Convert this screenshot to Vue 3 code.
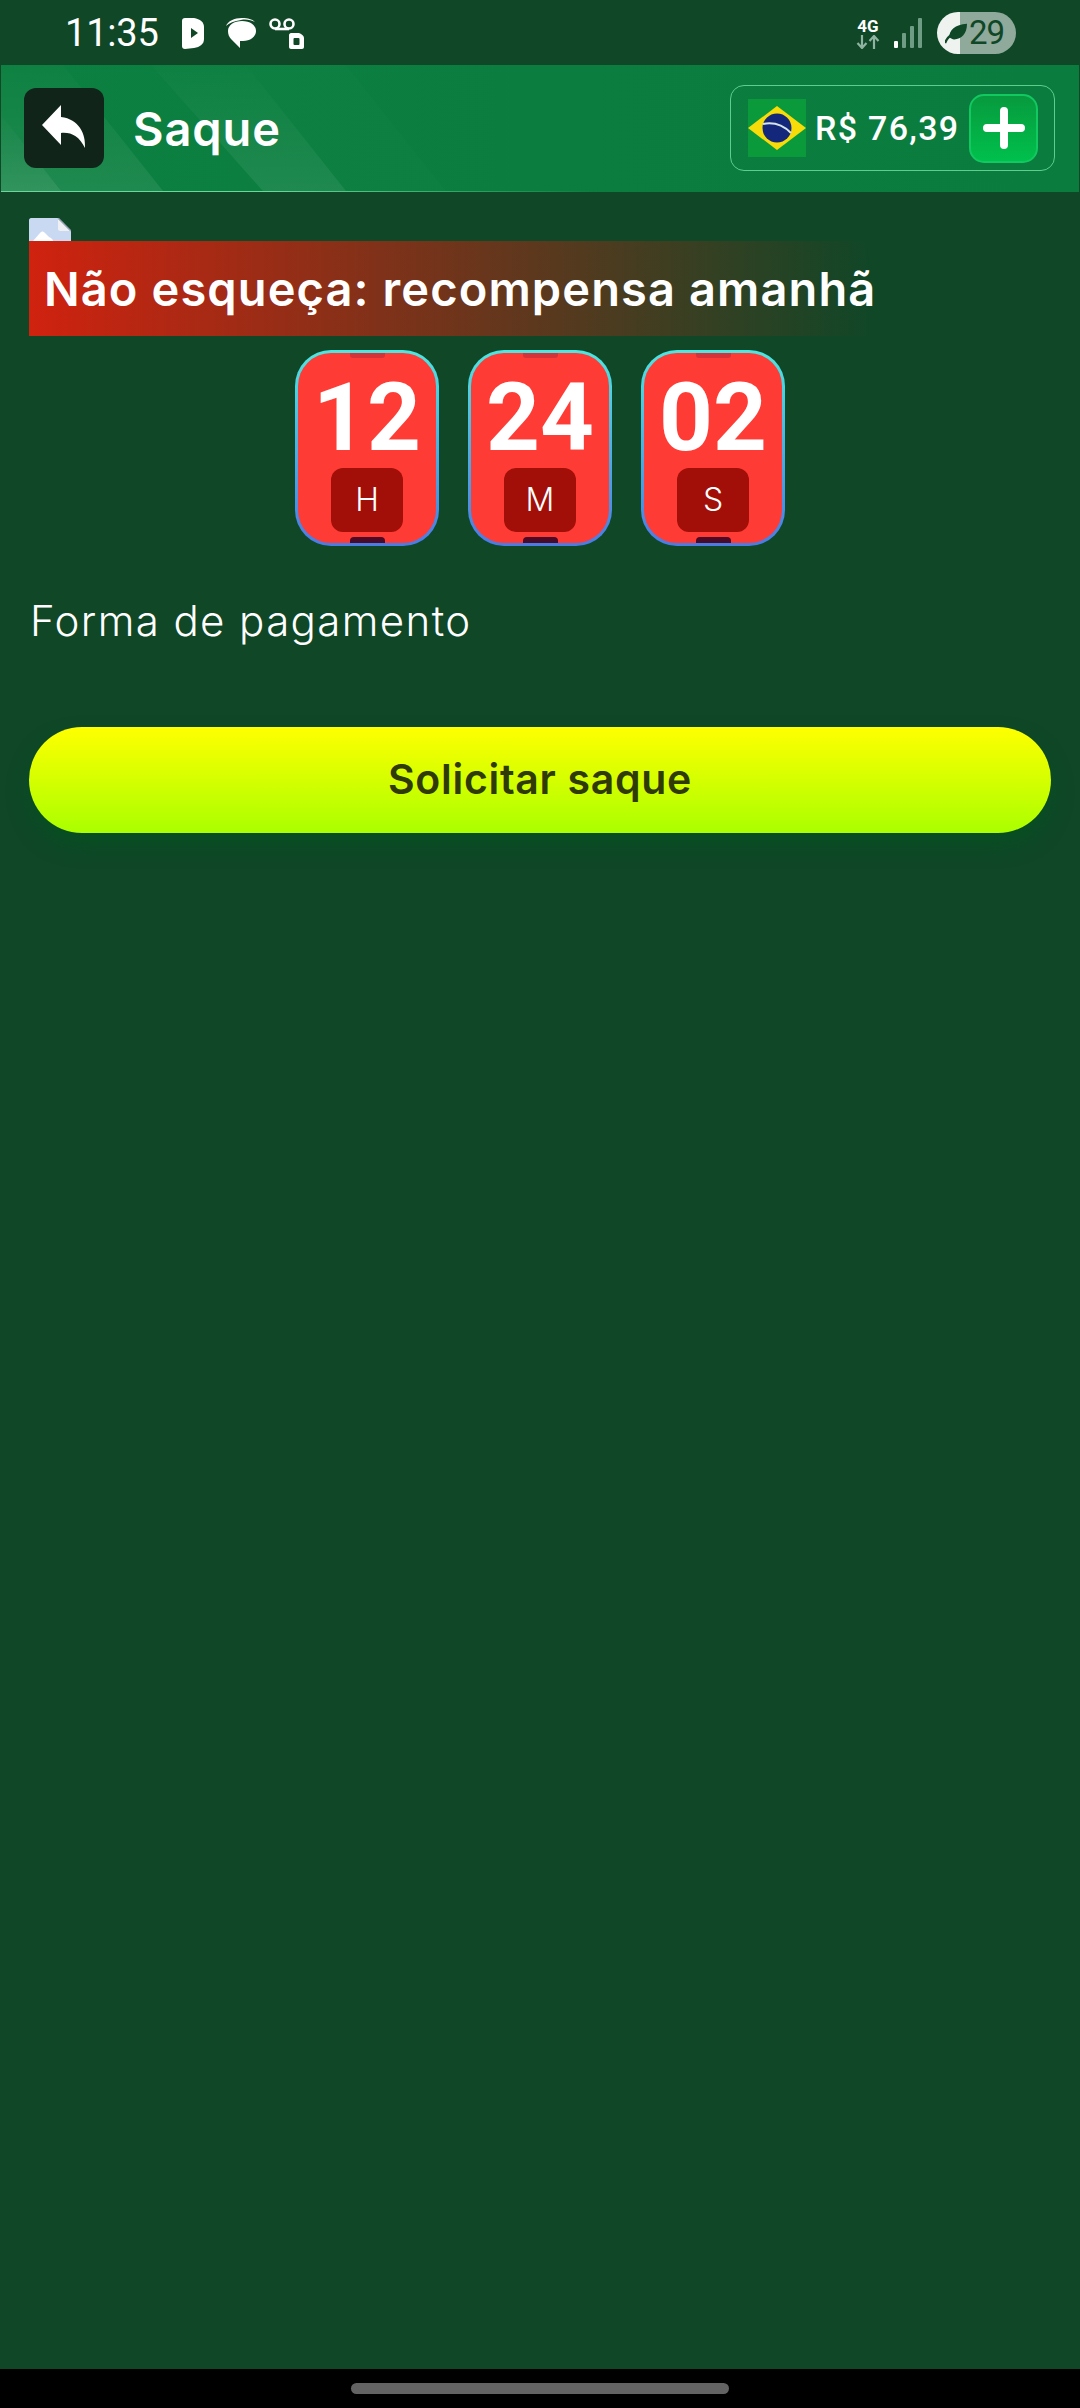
<template>
  <div class="page">
    <div class="status-bar">
      <div class="status-left">
        <span class="clock">11:35</span>
        <svg class="ic-play" width="22" height="32" viewBox="0 0 22 32">
          <path d="M3 1h9c6 1 10 4 10 9v12c0 5-4 8-10 9l-9 1c-2 0-3-1-3-3V4c0-2 1-3 3-3z" fill="#fff" />
          <path d="M9 11l7 5-7 5z" fill="#0f4727" />
        </svg>
        <svg class="ic-chat" width="32" height="30" viewBox="0 0 32 30">
          <path d="M1 8C3 3 9 0 17 0c6 0 10 1 13 4-4-2-9-3-14-2C9 3 4 5 1 8z" fill="#fff" />
          <path d="M3 13c0-6 6-10 14-10s14 4 14 10-6 10-13 10l-3 0v7l-9-9c-2-2-3-5-3-8z" fill="#fff" />
        </svg>
        <svg class="ic-voicemail" width="36" height="32" viewBox="0 0 36 32">
          <circle cx="6" cy="7" r="4.500" fill="none" stroke="#fff" stroke-width="2.600" />
          <circle cx="20" cy="7" r="4.500" fill="none" stroke="#fff" stroke-width="2.600" />
          <path d="M6 12h14" stroke="#fff" stroke-width="2.600" />
          <path d="M20 18c0-1 1-2 2-2h8c3 1 5 3 5 5v9c0 1-1 2-2 2H22c-1 0-2-1-2-2z" fill="#fff" />
          <rect x="24.500" y="21" width="6" height="7" rx="1" fill="#0f4727" />
        </svg>
      </div>
      <div class="status-right">
        <div class="net">
          <span class="net-label">4G</span>
          <svg width="24" height="14" viewBox="0 0 24 14">
            <path d="M6 0v12M1.500 8L6 13l4.500-5M18 14V2M13.500 6L18 1l4.500 5" fill="none" stroke="#8fb3a0" stroke-width="2.200" />
          </svg>
        </div>
        <svg class="signal" width="28" height="30" viewBox="0 0 28 30">
          <rect x="0" y="23" width="4" height="7" rx="1" fill="#fff" />
          <rect x="8" y="15" width="4" height="15" rx="1" fill="#6f9c85" />
          <rect x="16" y="8" width="4" height="22" rx="1" fill="#6f9c85" />
          <rect x="24" y="0" width="4" height="30" rx="1" fill="#6f9c85" />
        </svg>
        <div class="battery">
          <svg class="leaf" width="22" height="24" viewBox="0 0 24 24">
            <path d="M5 17C4 9 11 3 24 2c0 11-6 17-14 17-2 0-3-1-5-2z" fill="#0f4727" />
            <path d="M0 23c2-6 7-10 14-13" fill="none" stroke="#0f4727" stroke-width="2.500" />
          </svg>
          <span class="battery-num">29</span>
        </div>
      </div>
    </div>

    <header class="header">
      <svg class="stripes" width="1078" height="126" viewBox="0 0 1078 126">
        <defs>
          <linearGradient id="fade" x1="0" y1="0" x2="0" y2="1">
            <stop offset="0" stop-color="#fff" stop-opacity=".01" />
            <stop offset="1" stop-color="#fff" stop-opacity=".08" />
          </linearGradient>
        </defs>
        <polygon points="0,0 62,0 162,126 0,126" fill="url(#fade)" />
        <polygon points="0,50 60,126 0,126" fill="url(#fade)" />
        <polygon points="150,0 245,0 345,126 262,126" fill="url(#fade)" />
        <polygon points="245,0 345,0 445,126 345,126" fill="#fff" opacity=".012" />
      </svg>
      <button class="back">
        <svg width="46" height="46" viewBox="0 0 46 46">
          <path d="M20 2L1 22l19 20V30c10-1 18 3 24 15 1-14-6-29-24-31z" fill="#fff" />
        </svg>
      </button>
      <h1 class="title">Saque</h1>
      <div class="balance">
        <svg class="flag" width="58" height="58" viewBox="0 0 58 58">
          <rect width="58" height="58" fill="#0a9a3c" />
          <polygon points="0,29 29,7 58,29 29,51" fill="#f7dc0a" />
          <circle cx="29" cy="29" r="14.500" fill="#13287a" />
          <path d="M15 25c10-2 20 1 28 9" fill="none" stroke="#d6e4ea" stroke-width="2" />
        </svg>
        <span class="amount">R$ 76,39</span>
        <button class="plus">
          <svg width="42" height="42" viewBox="0 0 42 42">
            <path d="M21 4v34M4 21h34" stroke="#fff" stroke-width="8" stroke-linecap="round" />
          </svg>
        </button>
      </div>
    </header>

    <main class="content">
      <svg class="broken" width="42" height="23" viewBox="0 0 42 23">
        <path d="M0 2c0-1 1-2 2-2h27l13 13v10H0z" fill="#c9d9f2" />
        <path d="M29 0v11c0 1 1 2 2 2h11z" fill="#eef0f4" />
        <path d="M29 0l13 13" stroke="#9aa4b5" stroke-width="1.500" />
        <path d="M4 23l7-8c2-2 3-2 5 0l4 4c2 1 4 2 4 4z" fill="#fff" />
      </svg>
      <div class="banner">Não esqueça: recompensa amanhã</div>

      <div class="timer">
        <div v-for="c in cards" :key="c.label" class="card">
          <div class="card-in">
            <span class="notch-top"></span>
            <span class="num">{{ c.value }}</span>
            <span class="unit">{{ c.label }}</span>
            <span class="notch-bottom"></span>
          </div>
        </div>
      </div>

      <p class="pay-label">Forma de pagamento</p>
      <button class="submit">Solicitar saque</button>
    </main>

    <div class="nav-bar"><span class="handle"></span></div>
  </div>
</template>

<script setup>
const cards = [
  { value: '12', label: 'H' },
  { value: '24', label: 'M' },
  { value: '02', label: 'S' }
]
</script>

<style>
html, body { margin: 0; background: #0f4727; }
</style>

<style scoped>
.page {
  display: flex; flex-direction: column;
  width: 1080px; height: 2408px; overflow: hidden;
  background: #0f4727; color: #fff;
  font-family: 'Inter', 'Noto Sans', sans-serif;
}

.status-bar {
  display: flex; align-items: center; justify-content: space-between;
  height: 65px; padding: 0 64px 0 65px; box-sizing: border-box;
}
.status-left { display: flex; align-items: center; }
.clock {
  font-family: 'Roboto', sans-serif; font-size: 38px; line-height: 40px;
  width: 117px; letter-spacing: -.2px;
}
.ic-chat { margin-left: 21px; }
.ic-voicemail { margin-left: 12px; }
.status-right { display: flex; align-items: center; }
.net { display: flex; flex-direction: column; align-items: center; width: 24px; margin-top: 2px; }
.net-label {
  font-family: 'Roboto', sans-serif; font-weight: 700; font-size: 17px;
  line-height: 17px;
}
.signal { margin-left: 14px; margin-right: 15px; }
.battery {
  position: relative; display: flex; align-items: center; justify-content: flex-end;
  width: 79px; height: 42px; border-radius: 21px; box-sizing: border-box;
  padding-right: 12px;
  background: linear-gradient(90deg, #eef3f0 0, #eef3f0 23px, #8fa99a 23px);
}
.battery-num {
  font-family: 'Roboto', sans-serif; font-size: 33px; letter-spacing: -1px;
  color: #0f4727; line-height: 42px;
}
.leaf { position: absolute; left: 8px; top: 9px; }

.header {
  position: relative; display: flex; align-items: center;
  height: 127px; box-sizing: border-box; margin: 0 1px; padding: 0 24px 0 23px;
  background: linear-gradient(90deg, #0c8040, #0a7c3e);
  border-bottom: 1px solid;
  border-image: linear-gradient(90deg, #6ad79a 0%, #6ad79a 25%, rgba(106, 215, 154, 0) 55%) 1;
}
.stripes { position: absolute; left: 0; top: 0; pointer-events: none; }
.back {
  position: relative; display: flex; align-items: center; justify-content: center;
  width: 80px; height: 80px; padding: 0; border: 0; border-radius: 12px;
  background: #10241a;
}
.back svg { margin-top: -4px; }
.title {
  position: relative; margin: 0 0 0 29px;
  font-size: 47px; font-weight: 600; letter-spacing: .9px; line-height: 1;
}
.balance {
  position: relative; display: flex; align-items: center;
  margin-left: auto; width: 325px; height: 86px; box-sizing: border-box;
  padding: 0 16px 0 17px;
  border: 1px solid #5ccf8e; border-radius: 14px;
}
.amount {
  margin-left: 9px; font-family: 'Roboto', sans-serif; font-weight: 500;
  font-size: 34px; letter-spacing: 1.300px; white-space: nowrap;
}
.plus {
  display: flex; align-items: center; justify-content: center;
  width: 69px; height: 69px; margin-left: auto; padding: 0;
  border: 2px solid #12c860; border-radius: 15px; box-sizing: border-box;
  background: linear-gradient(180deg, #079a3e, #00c04c);
}

.content {
  flex: 1; display: flex; flex-direction: column; align-items: flex-start;
  min-height: 0; padding: 26px 29px 0;
}
.broken { display: block; }
.banner {
  width: 846px; height: 95px; box-sizing: border-box; padding-left: 15px;
  line-height: 95px; font-size: 47px; font-weight: 600; letter-spacing: 1.100px;
  white-space: nowrap;
  background: linear-gradient(90deg, #d0220f 0%, rgba(208, 34, 15, 0) 100%);
}

.timer { display: flex; gap: 29px; align-self: center; margin-top: 14px; }
.card {
  width: 144px; height: 196px; box-sizing: border-box; padding: 3px;
  border-radius: 36px;
  background: linear-gradient(180deg, #4de6e0, #4a7be6);
}
.card-in {
  position: relative; display: flex; flex-direction: column; align-items: center;
  height: 100%; border-radius: 33px; background: #ff3b35; overflow: hidden;
}
.num {
  font-family: 'Roboto', sans-serif; font-weight: 700; font-size: 94px;
  line-height: 94px; margin-top: 18px; white-space: nowrap;
}
.unit {
  display: flex; align-items: center; justify-content: center;
  width: 72px; height: 64px; margin-top: 3px; border-radius: 12px;
  background: #a10f08; font-size: 32px; font-weight: 300; line-height: 1;
}
.notch-top, .notch-bottom {
  position: absolute; left: 50%; width: 35px; margin-left: -17px;
}
.notch-top { top: 0; height: 5px; background: #d6323a; border-radius: 0 0 3px 3px; }
.notch-bottom { bottom: 0; height: 6px; background: #4a0a28; border-radius: 4px 4px 0 0; }

.pay-label {
  margin: 50px 0 0 1px; font-size: 42px; font-weight: 300; line-height: 50px;
  letter-spacing: 1.400px; white-space: nowrap;
}
.submit {
  width: 100%; height: 106px; margin-top: 81px; padding: 0 0 3px; border: 0;
  border-radius: 53px;
  background: linear-gradient(180deg, #ffff00, #aaff00);
  box-shadow: 0 12px 20px #074f22;
  color: #2f3a06; font-family: inherit; font-size: 41px; font-weight: 600;
  letter-spacing: .7px;
}

.nav-bar {
  display: flex; justify-content: center; align-items: flex-start;
  height: 39px; background: #000; flex-shrink: 0;
}
.handle { width: 378px; height: 11px; margin-top: 14px; border-radius: 6px; background: #636363; }
</style>
